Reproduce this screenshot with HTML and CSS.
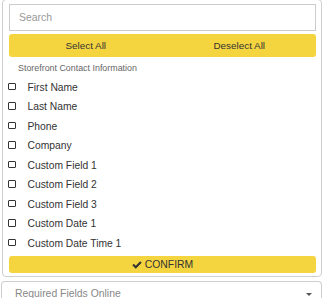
FILE: index.html
```html
<!DOCTYPE html>
<html>
<head>
<meta charset="utf-8">
<link rel="stylesheet" href="styles.css">
</head>
<body>
<div class="panel">
  <input class="search" type="text" placeholder="Search">
  <div class="bulk">
    <span class="bulk-btn">Select All</span>
    <span class="bulk-btn">Deselect All</span>
  </div>
  <div class="group">Storefront Contact Information</div>
  <ul class="list">
    <li class="item"><span class="box"></span><span>First Name</span></li>
    <li class="item"><span class="box"></span><span>Last Name</span></li>
    <li class="item"><span class="box"></span><span>Phone</span></li>
    <li class="item"><span class="box"></span><span>Company</span></li>
    <li class="item"><span class="box"></span><span>Custom Field 1</span></li>
    <li class="item"><span class="box"></span><span>Custom Field 2</span></li>
    <li class="item"><span class="box"></span><span>Custom Field 3</span></li>
    <li class="item"><span class="box"></span><span>Custom Date 1</span></li>
    <li class="item"><span class="box"></span><span>Custom Date Time 1</span></li>
  </ul>
  <div class="confirm">
    <svg class="check" viewBox="0 0 16 12" width="10" height="8"><path d="M0.5 6.3 L2.9 3.9 L6 7 L13.1 -0.1 L15.5 2.3 L6 11.8 Z" fill="#333"/></svg>
    <span>CONFIRM</span>
  </div>
</div>
<div class="select">
  <span class="select-text">Required Fields Online</span>
  <span class="caret"></span>
</div>
</body>
</html>
```
FILE: styles.css
```css
html, body {
  margin: 0;
  padding: 0;
  background: #fff;
  font-family: "Liberation Sans", Arial, sans-serif;
  color: #333;
}
body {
  width: 328px;
  height: 298px;
  overflow: hidden;
}
.panel {
  box-sizing: border-box;
  width: 320px;
  margin: -1px 0 0 2px;
  border: 1px solid #cfcfcf;
  border-radius: 4px;
  padding: 4px 5px 3px 6px;
  background: #fff;
}
.search {
  display: block;
  box-sizing: border-box;
  width: 307px;
  height: 27px;
  margin: 0;
  border: 1px solid #cccccc;
  border-radius: 0;
  padding: 0 0 0 9px;
  font-family: "Liberation Sans", Arial, sans-serif;
  font-size: 10.4px;
  color: #333;
  outline: none;
}
.search::placeholder {
  color: #999;
}
.bulk {
  display: flex;
  margin-top: 3px;
  height: 23px;
  background: #f5d53f;
  border-radius: 3px;
}
.bulk-btn {
  flex: 1;
  display: flex;
  align-items: center;
  justify-content: center;
  font-size: 9.9px;
  color: #333;
}
.group {
  margin-top: 4px;
  padding-left: 9px;
  height: 14px;
  line-height: 14px;
  font-size: 8.9px;
  color: #666;
}
.list {
  list-style: none;
  margin: 2.25px 0 0 -1px;
  padding: 0;
}
.item {
  display: flex;
  align-items: center;
  gap: 12px;
  height: 19.5px;
  font-size: 10.3px;
  color: #333;
}
.box {
  box-sizing: border-box;
  width: 7.5px;
  height: 7.5px;
  border: 1px solid #333;
  border-radius: 1px;
  margin-top: -1px;
}
.confirm {
  display: flex;
  align-items: center;
  justify-content: center;
  gap: 3px;
  margin-top: 3.5px;
  height: 17px;
  background: #f5d53f;
  border-radius: 3px;
  font-size: 10.4px;
  color: #333;
}
.check {
  display: block;
}
.select {
  box-sizing: border-box;
  display: flex;
  align-items: flex-start;
  justify-content: space-between;
  width: 321px;
  height: 18px;
  margin: 4px 0 0 1px;
  border: 1px solid #cfcfcf;
  border-bottom: none;
  border-radius: 4px 4px 0 0;
  padding: 6px 9px 0 13px;
  font-size: 10.4px;
  line-height: 11px;
  color: #888;
}
.caret {
  width: 0;
  height: 0;
  margin-top: 5px;
  border-left: 3px solid transparent;
  border-right: 3px solid transparent;
  border-top: 3px solid #555;
}
```
